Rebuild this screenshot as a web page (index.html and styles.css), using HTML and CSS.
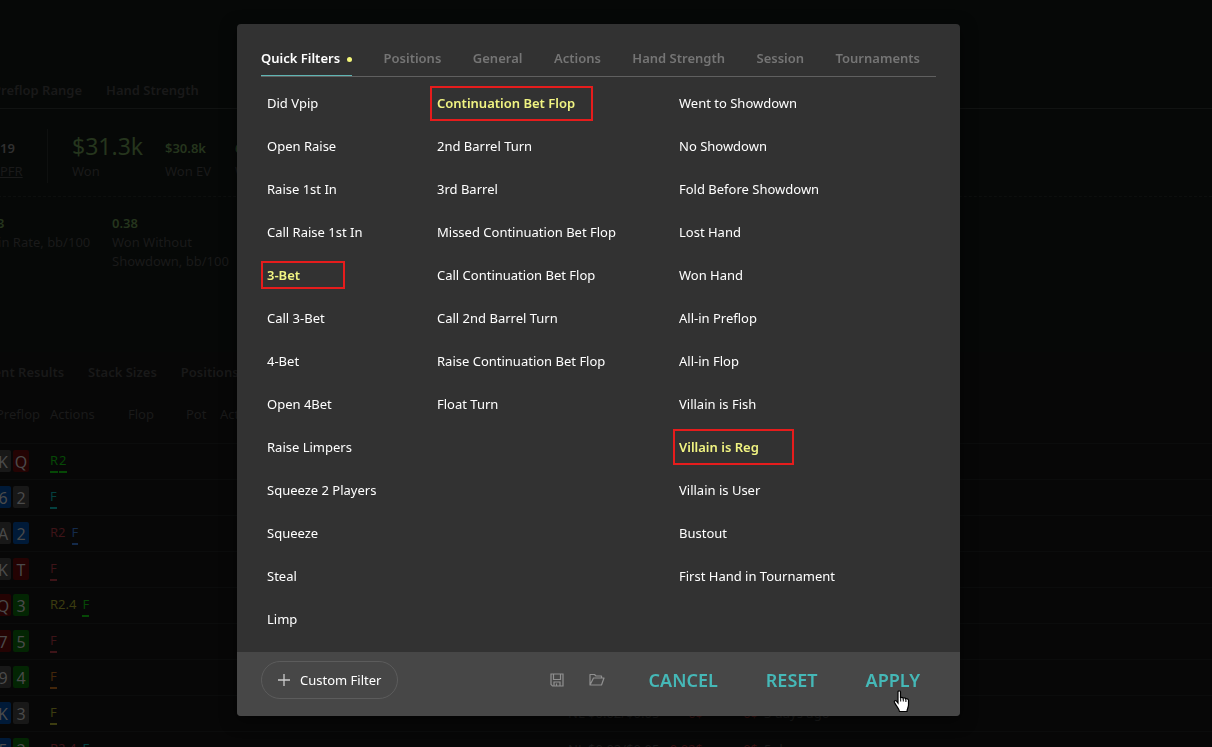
FILE: index.html
```html
<!DOCTYPE html>
<html lang="en">
<head>
<meta charset="utf-8">
<title>Hand filters</title>
<link rel="stylesheet" href="styles.css">
</head>
<body>
<main class="page">
  <section class="summary">
    <nav class="page-tabs top-tabs"><span>Preflop Range</span><span>Hand Strength</span></nav>
    <div class="stats">
      <div class="stat pfr"><b class="plain">19</b><u>PFR</u></div>
      <div class="stat won"><b class="big">$31.3k</b><span>Won</span></div>
      <div class="stat ev"><b>$30.8k</b><span>Won EV</span></div>
      <div class="stat"><b>66</b><span>Won</span></div>
    </div>
    <div class="rates">
      <div class="stat rate"><b>.13</b><span>Win Rate, bb/100</span></div>
      <div class="stat"><b>0.38</b><span>Won Without<br>Showdown, bb/100</span></div>
    </div>
  </section>
  <section class="results">
    <nav class="page-tabs"><span>Recent Results</span><span>Stack Sizes</span><span>Positions</span></nav>
    <table class="hands">
      <thead><tr><th class="c-cards">Preflop</th><th class="c-act">Actions</th><th class="c-flop">Flop</th><th class="c-pot">Pot</th><th class="c-act2">Actions</th><th class="c-limit"></th><th class="c-won"></th><th class="c-ev"></th><th></th></tr></thead>
      <tbody>
        <tr><td><i class="card gray">K</i><i class="card red">Q</i></td><td colspan="8"><em class="green">R</em><em class="green second">2</em></td></tr>
        <tr><td><i class="card blue">6</i><i class="card gray">2</i></td><td colspan="8"><em class="teal">F</em></td></tr>
        <tr><td><i class="card gray">A</i><i class="card blue">2</i></td><td colspan="8"><em class="rose bare">R2</em><em class="navy">F</em></td></tr>
        <tr><td><i class="card gray">K</i><i class="card red">T</i></td><td colspan="8"><em class="rose">F</em></td></tr>
        <tr><td><i class="card red">Q</i><i class="card green-bg">3</i></td><td colspan="8"><em class="olive bare">R2.4</em><em class="green">F</em></td></tr>
        <tr><td><i class="card red">7</i><i class="card green-bg">5</i></td><td colspan="8"><em class="rose">F</em></td></tr>
        <tr><td><i class="card gray">9</i><i class="card green-bg">4</i></td><td colspan="8"><em class="orange">F</em></td></tr>
        <tr><td><i class="card blue">K</i><i class="card gray">3</i></td><td><em class="olive">F</em></td><td></td><td></td><td></td><td>NL $0.02/$0.05</td><td class="loss">0$</td><td class="loss">0$</td><td class="ago">3 days ago</td></tr>
        <tr><td><i class="card blue">5</i><i class="card green-bg">3</i></td><td><em class="rose bare">R2.4</em><em class="teal">F</em></td><td></td><td></td><td></td><td>NL $0.02/$0.05</td><td class="loss">0.02$</td><td class="loss">0$</td><td class="ago">5 d</td></tr>
      </tbody>
    </table>
  </section>
</main>

<div class="overlay">
  <div class="dialog" role="dialog" aria-label="Filters">
    <div class="tabs" role="tablist">
      <button class="tab active" role="tab" aria-selected="true">Quick Filters<span class="dot"></span></button>
      <button class="tab" role="tab">Positions</button>
      <button class="tab" role="tab">General</button>
      <button class="tab" role="tab">Actions</button>
      <button class="tab" role="tab">Hand Strength</button>
      <button class="tab" role="tab">Session</button>
      <button class="tab" role="tab">Tournaments</button>
    </div>
    <div class="filters">
      <div class="column">
        <button class="filter">Did Vpip</button>
        <button class="filter">Open Raise</button>
        <button class="filter">Raise 1st In</button>
        <button class="filter">Call Raise 1st In</button>
        <button class="filter on" aria-pressed="true">3-Bet<span class="mark mark-bet"></span></button>
        <button class="filter">Call 3-Bet</button>
        <button class="filter">4-Bet</button>
        <button class="filter">Open 4Bet</button>
        <button class="filter">Raise Limpers</button>
        <button class="filter">Squeeze 2 Players</button>
        <button class="filter">Squeeze</button>
        <button class="filter">Steal</button>
        <button class="filter">Limp</button>
      </div>
      <div class="column">
        <button class="filter on" aria-pressed="true">Continuation Bet Flop<span class="mark mark-flop"></span></button>
        <button class="filter">2nd Barrel Turn</button>
        <button class="filter">3rd Barrel</button>
        <button class="filter">Missed Continuation Bet Flop</button>
        <button class="filter">Call Continuation Bet Flop</button>
        <button class="filter">Call 2nd Barrel Turn</button>
        <button class="filter">Raise Continuation Bet Flop</button>
        <button class="filter">Float Turn</button>
      </div>
      <div class="column">
        <button class="filter">Went to Showdown</button>
        <button class="filter">No Showdown</button>
        <button class="filter">Fold Before Showdown</button>
        <button class="filter">Lost Hand</button>
        <button class="filter">Won Hand</button>
        <button class="filter">All-in Preflop</button>
        <button class="filter">All-in Flop</button>
        <button class="filter">Villain is Fish</button>
        <button class="filter on" aria-pressed="true">Villain is Reg<span class="mark mark-reg"></span></button>
        <button class="filter">Villain is User</button>
        <button class="filter">Bustout</button>
        <button class="filter">First Hand in Tournament</button>
      </div>
    </div>
    <footer class="footer">
      <button class="custom"><svg width="12" height="12" viewBox="0 0 12 12"><path d="M6 0v12M0 6h12" stroke="#ccc" stroke-width="1.3"/></svg>Custom Filter</button>
      <div class="actions">
        <button class="icon" aria-label="Save"><svg width="14" height="14" viewBox="0 0 14 14" fill="none" stroke="#909090" stroke-width="1.2"><path d="M1 1h12v12H2.500L1 11.500zM3.500 1v5.500h7V1M4 13V9h6v4M6.500 10.500V13"/></svg></button>
        <button class="icon" aria-label="Open"><svg width="16" height="14" viewBox="0 0 16 14" fill="none" stroke="#909090" stroke-width="1.2" stroke-linejoin="round"><path d="M1 12V1.500h4.500L7 3h5.500v2M1 12h11.500l2.500-7H4.500z"/></svg></button>
        <button class="action">CANCEL</button>
        <button class="action">RESET</button>
        <button class="action">APPLY<svg class="pointer" width="18" height="23" viewBox="0 0 18 23"><path d="M5 1.800C5 .5 7.500 .5 7.500 1.800V8c.3-1 2.500-.9 2.700.3.500-.8 2.300-.6 2.500.7.800-.7 2.600-.2 2.800 1.200V15c0 2-1.300 3.500-1.500 6.500H6.500C6 18.500 3.500 16.500 1.500 12.500c-.8-1.700.8-2.600 2-1.300L5 13z" fill="#fff" stroke="#000" stroke-width="1.200"/><path d="M7.700 8v3.500M10.300 8.500v3M12.900 9.500v2.500" stroke="#000"/></svg></button>
      </div>
    </footer>
  </div>
</div>
</body>
</html>
```
FILE: styles.css
```css
* { box-sizing: border-box; }
html { height: 100%; overflow: hidden; }
body {
  margin: 0;
  height: 100%;
  overflow: hidden;
  background: #060807;
  color: #1a1a1a;
  font: 13px/19px "Noto Sans", "Open Sans", sans-serif;
}
button {
  margin: 0;
  padding: 0;
  border: 0;
  background: none;
  color: inherit;
  font: inherit;
  cursor: pointer;
}

/* dimmed page */
.page { margin-left: -32px; }
.summary { height: 352px; }
.page-tabs { display: flex; gap: 24px; font-weight: 600; color: #191919; }
.top-tabs { padding: 81px 0 8px 25px; border-bottom: 1px solid #111312; }
.stats { display: flex; height: 88px; padding-top: 20px; border-bottom: 1px dashed #0d0f0e; }
.stat { display: flex; flex-direction: column; }
.stat b { height: 23px; margin-bottom: 10px; color: #25351d; font-weight: 600; line-height: 38px; }
.stat .plain { color: #303030; }
.stat .big { font-size: 23px; font-weight: 400; line-height: 34px; }
.pfr { width: 48px; height: 54px; margin-left: 32px; border-right: 1px solid #0e100f; }
.won { width: 93px; margin-left: 24px; }
.ev { width: 70px; }
.rates { display: flex; padding-top: 17px; }
.rates .stat b { height: 19px; margin: 0; line-height: 19px; }
.rate { width: 126px; padding-left: 18px; }
.rates .stat:last-child { margin-left: 18px; }
.results { padding-top: 11px; background: #070707; }
.results .page-tabs { padding-left: 3px; }
.hands { width: 100%; margin-top: 12px; table-layout: fixed; border-collapse: collapse; }
.hands th { height: 49px; padding: 0 0 8px; font-weight: 400; text-align: left; }
.hands td { height: 36px; padding: 0; border-top: 1px solid #0b0c0c; white-space: nowrap; }
.hands th:first-child { padding-left: 28px; }
.hands td:first-child { padding-left: 27px; }
.c-cards { width: 82px; }
.c-act { width: 78px; }
.c-flop { width: 58px; }
.c-pot { width: 34px; }
.c-act2 { width: 348px; }
.c-limit { width: 92px; }
.c-won { width: 43px; }
.c-ev { width: 55px; }
.hands .loss { color: #351010; text-align: right; }
.hands .ago { padding-left: 6px; }
.card {
  display: inline-block;
  width: 16px;
  height: 22px;
  margin-right: 2px;
  border-radius: 2px;
  color: #4a4a4a;
  font-size: 16px;
  font-style: normal;
  line-height: 24px;
  text-align: center;
}
.gray { background: #181818; }
.red { background: #240303; }
.blue { background: #001a38; }
.green-bg { background: #032503; }
.hands em { display: inline-block; font-style: normal; line-height: 22px; border-bottom: 2px solid; }
.hands .bare { margin-right: 6px; border-color: transparent; }
.green { color: #064806; }
.teal { color: #04403f; }
.rose { color: #3d1418; }
.navy { color: #142a4a; }
.olive { color: #3c3c10; }
.orange { color: #43260a; }
.hands .second { margin-left: 1px; }

/* dialog */
.overlay {
  position: fixed;
  inset: 0;
  display: flex;
  align-items: flex-start;
  justify-content: center;
  padding: 24px 15px 24px 0;
}
.dialog {
  width: 100%;
  max-width: 723px;
  overflow: hidden;
  border-radius: 4px;
  background: #323232;
  color: #fff;
  box-shadow: 0 4px 16px rgba(0, 0, 0, 0.5);
}
.tabs {
  display: flex;
  justify-content: space-between;
  margin: 24px 24px 0;
  padding-right: 16px;
  border-bottom: 1px solid #606060;
}
.tab {
  display: flex;
  align-items: center;
  height: 28px;
  padding-bottom: 7px;
  border-bottom: 1px solid transparent;
  color: #757575;
  font-weight: 600;
}
.tab.active { color: #fff; border-color: #5fb5b3; }
.dot { width: 5px; height: 5px; margin: 3px 0 0 7px; border-radius: 50%; background: #f4f77a; }
.filters { display: grid; grid-template-columns: 170px 242px 1fr; padding: 5px 30px 11px; }
.column { display: flex; flex-direction: column; align-items: flex-start; }
.filter { position: relative; height: 43px; white-space: nowrap; }
.filter.on { color: #f1f482; font-weight: 600; }
.mark { position: absolute; border: 2px solid #e61c1c; }
.mark-flop { left: -7px; top: 4px; width: 163px; height: 35px; }
.mark-bet { left: -6px; top: 7px; width: 84px; height: 28px; }
.mark-reg { left: -6px; top: 3px; width: 121px; height: 36px; }
.footer {
  display: flex;
  align-items: center;
  justify-content: space-between;
  padding: 9px 40px 17px 24px;
  background: #474747;
}
.custom {
  display: flex;
  align-items: center;
  gap: 10px;
  height: 38px;
  padding: 0 16px;
  border: 1px solid #5c5c5c;
  border-radius: 19px;
}
.actions { display: flex; align-items: center; }
.icon { display: flex; margin-right: 25px; }
.icon + .action { margin-left: 19px; }
.action { position: relative; color: #45b8b7; font-size: 18px; font-weight: 600; line-height: 24px; }
.action + .action { margin-left: 48px; }
.pointer { position: absolute; right: 9px; top: 22px; }
```
